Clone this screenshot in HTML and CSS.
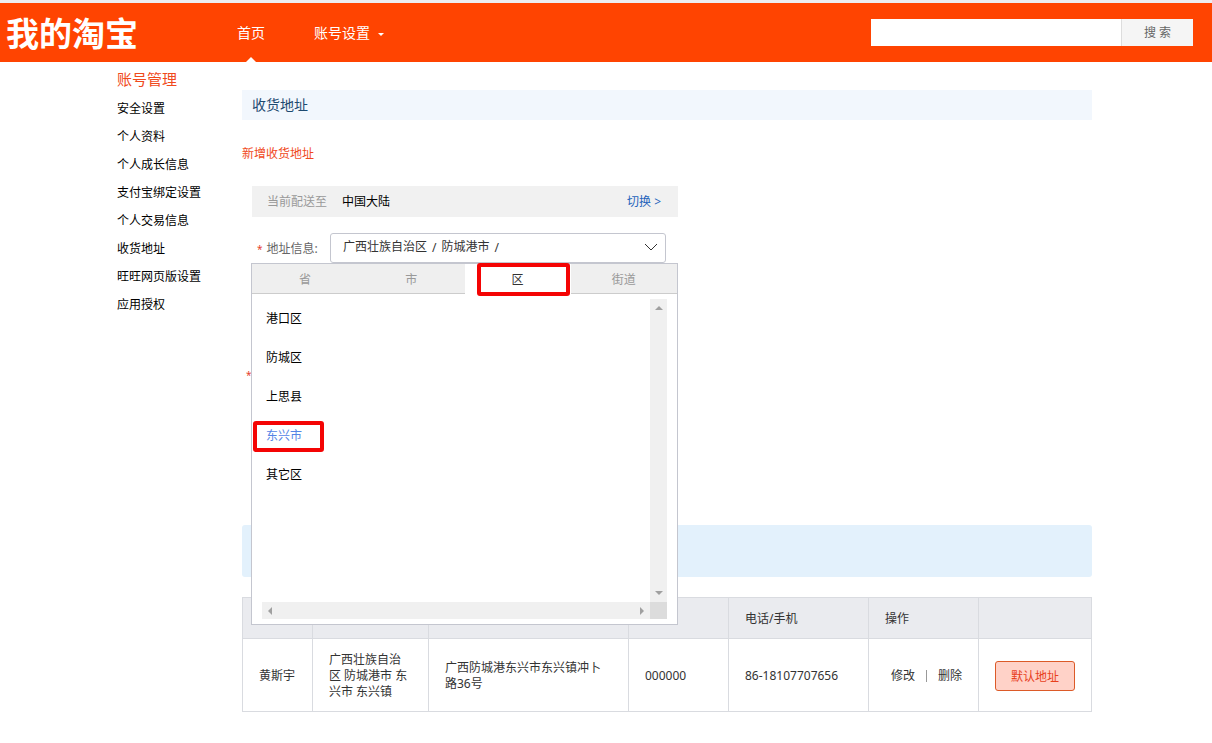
FILE: index.html
```html
<!DOCTYPE html>
<html lang="zh-CN">
<head>
<meta charset="utf-8">
<title>我的淘宝 - 收货地址</title>
<link rel="stylesheet" href="styles.css">
</head>
<body>
<header class="header">
  <a class="logo" href="#">我的淘宝</a>
  <nav class="topnav">
    <a class="topnav-link current" href="#">首页</a>
    <a class="topnav-link" href="#">账号设置
      <svg class="caret" viewBox="0 0 6 3" aria-hidden="true"><path d="M0 0h6L3 3z"/></svg>
    </a>
  </nav>
  <form class="search">
    <input class="search-input" type="text" aria-label="搜索">
    <button class="search-button" type="button">搜 索</button>
  </form>
</header>

<div class="page">
  <nav class="sidebar">
    <h2 class="sidebar-title">账号管理</h2>
    <ul class="sidebar-list">
      <li><a href="#">安全设置</a></li>
      <li><a href="#">个人资料</a></li>
      <li><a href="#">个人成长信息</a></li>
      <li><a href="#">支付宝绑定设置</a></li>
      <li><a href="#">个人交易信息</a></li>
      <li><a href="#">收货地址</a></li>
      <li><a href="#">旺旺网页版设置</a></li>
      <li><a href="#">应用授权</a></li>
    </ul>
  </nav>

  <main class="content">
    <h1 class="content-title">收货地址</h1>
    <h2 class="add-title">新增收货地址</h2>

    <form class="address-form">
      <div class="deliver">
        <span class="deliver-label">当前配送至</span>
        <span class="deliver-place">中国大陆</span>
        <a class="deliver-switch" href="#">切换 &gt;</a>
      </div>

      <div class="field">
        <label class="field-label" for="region"><span class="required">*</span>地址信息:</label>
        <button class="region" id="region" type="button" aria-haspopup="listbox" aria-expanded="true">
          <span>广西壮族自治区</span><span class="slash">/</span><span>防城港市</span><span class="slash">/</span>
          <svg class="chevron" viewBox="0 0 14 8" aria-hidden="true"><path d="M1 1l6 6 6-6"/></svg>
        </button>

        <div class="panel">
          <div class="tabs">
            <button class="tab" type="button">省</button>
            <button class="tab" type="button">市</button>
            <button class="tab active" type="button">区<span class="mark mark-tab"></span></button>
            <button class="tab" type="button">街道</button>
          </div>
          <div class="scroller">
            <ul class="options">
              <li><button class="option" type="button">港口区</button></li>
              <li><button class="option" type="button">防城区</button></li>
              <li><button class="option" type="button">上思县</button></li>
              <li><button class="option selected" type="button">东兴市<span class="mark mark-option"></span></button></li>
              <li><button class="option" type="button">其它区</button></li>
            </ul>
            <div class="track vertical">
              <svg class="arrow-v" viewBox="0 0 8 4" aria-hidden="true"><path d="M0 4h8L4 0z"/></svg>
              <svg class="arrow-v" viewBox="0 0 8 4" aria-hidden="true"><path d="M0 0h8L4 4z"/></svg>
            </div>
            <div class="track">
              <svg class="arrow-h" viewBox="0 0 4 8" aria-hidden="true"><path d="M4 0v8L0 4z"/></svg>
              <svg class="arrow-h" viewBox="0 0 4 8" aria-hidden="true"><path d="M0 0v8l4-4z"/></svg>
            </div>
            <div class="corner"></div>
          </div>
        </div>
      </div>

      <div class="detail-row"><span class="required">*</span></div>
    </form>

    <div class="notice"></div>

    <table class="addresses">
      <colgroup>
        <col class="col-name"><col class="col-region"><col class="col-street"><col class="col-zip">
        <col class="col-phone"><col class="col-action"><col>
      </colgroup>
      <thead>
        <tr><th></th><th></th><th></th><th></th><th>电话/手机</th><th>操作</th><th></th></tr>
      </thead>
      <tbody>
        <tr>
          <td>黄斯宇</td>
          <td>广西壮族自治区 防城港市 东兴市 东兴镇</td>
          <td>广西防城港东兴市东兴镇冲卜路36号</td>
          <td>000000</td>
          <td>86-18107707656</td>
          <td><div class="actions"><a href="#">修改</a><span class="divider"></span><a href="#">删除</a></div></td>
          <td><button class="default-button" type="button">默认地址</button></td>
        </tr>
      </tbody>
    </table>
  </main>
</div>
</body>
</html>
```

FILE: styles.css
```css
* {
  box-sizing: border-box;
}

body {
  margin: 0;
  background: #fff;
  color: #333;
  font: 12px/16px "Noto Sans", "Noto Sans CJK SC", sans-serif;
}

h1, h2, ul {
  margin: 0;
  padding: 0;
  font-weight: 400;
  list-style: none;
}

a {
  color: inherit;
  text-decoration: none;
}

button, input {
  margin: 0;
  padding: 0;
  border: 0;
  border-radius: 0;
  background: none;
  color: inherit;
  font: inherit;
}

/* Header */
.header {
  display: flex;
  align-items: center;
  height: 62px;
  padding: 0 19px 0 6px;
  border-top: 3px solid #ededf0;
  background: #ff4401;
  color: #fff;
}

.logo {
  width: 231px;
  padding-bottom: 2px;
  font-family: "Noto Sans CJK SC", sans-serif;
  font-size: 33px;
  font-weight: 700;
  line-height: 40px;
}

.topnav {
  display: flex;
  align-self: stretch;
  gap: 49px;
  font-size: 14px;
}

.topnav-link {
  position: relative;
  display: flex;
  align-items: center;
  gap: 8px;
}

.current::after {
  content: "";
  position: absolute;
  bottom: 0;
  left: 50%;
  margin-left: -5px;
  border: 5px solid transparent;
  border-top: 0;
  border-bottom-color: #fff;
}

.caret {
  width: 6px;
  height: 3px;
  margin-top: 3px;
  fill: #fff;
}

.search {
  display: flex;
  height: 27px;
  margin-left: auto;
}

.search-input {
  width: 250px;
  padding: 0 8px;
  background: #fff;
  color: #333;
}

.search-button {
  width: 72px;
  border-left: 1px solid #ddd;
  background: #f5f5f5;
  color: #666;
}

/* Page columns */
.page {
  display: grid;
  grid-template-columns: 125px 1fr;
  padding: 0 120px 31px 117px;
}

.sidebar {
  padding-top: 3px;
  color: #000;
}

.sidebar-title {
  color: #f04a1c;
  font-size: 15px;
  line-height: 28px;
}

.sidebar-list {
  padding-top: 2px;
  line-height: 28px;
}

.content {
  padding-top: 28px;
}

.content-title {
  padding-left: 10px;
  background: #f2f7fd;
  color: #1d4a70;
  font-size: 14px;
  line-height: 30px;
}

.add-title {
  margin-top: 20px;
  color: #f04a1c;
  font-size: 12px;
  line-height: 28px;
}

/* Address form */
.address-form {
  max-width: 436px;
  margin-top: 18px;
  padding: 0 0 142px 10px;
}

.deliver {
  display: flex;
  gap: 15px;
  padding: 1px 17px 0 15px;
  background: #f1f1f1;
  line-height: 30px;
}

.deliver-label {
  color: #999;
}

.deliver-place {
  color: #000;
}

.deliver-switch {
  margin-left: auto;
  color: #2463bb;
}

.field {
  position: relative;
  display: flex;
  align-items: center;
  margin-top: 16px;
  padding-right: 12px;
}

.field-label {
  display: flex;
  gap: 4px;
  width: 78px;
  padding: 2px 0 0 5px;
  color: #666;
}

.required {
  color: #e5432f;
  font-size: 10px;
}

.region {
  display: flex;
  flex: 1;
  align-items: center;
  gap: 5px;
  height: 30px;
  padding: 0 7px 2px 12px;
  border: 1px solid #c4c6cf;
  border-radius: 3px;
}

.slash {
  padding-top: 2px;
}

.chevron {
  width: 14px;
  height: 8px;
  margin-left: auto;
  fill: none;
  stroke: #333;
}

.detail-row {
  margin: 104px 0 0 -6px;
}

/* Region drop-down */
.panel {
  position: absolute;
  z-index: 1;
  top: 100%;
  right: 0;
  left: -1px;
  padding-bottom: 5px;
  border: 1px solid #c4c6cf;
  background: #fff;
}

.tabs {
  display: grid;
  grid-template-columns: repeat(4, 1fr);
}

.tab {
  position: relative;
  height: 30px;
  padding-top: 2px;
  border-bottom: 1px solid #ccc;
  background: #efefef;
  color: #999;
}

.active {
  border-bottom-color: #fff;
  background: #fff;
  color: #333;
}

.mark {
  position: absolute;
  border: 4px solid #f40404;
  border-radius: 3px;
}

.mark-tab {
  top: -1px;
  right: 1px;
  bottom: -3px;
  left: 12px;
}

.scroller {
  display: grid;
  grid-template: 303px 17px / 1fr 17px;
  margin: 5px 10px 0;
}

.options {
  color: #000;
}

.option {
  position: relative;
  height: 39px;
  padding-left: 4px;
}

.selected {
  color: #5584e5;
}

.mark-option {
  top: 5px;
  right: -22px;
  bottom: 3px;
  left: -9px;
}

.track {
  display: flex;
  align-items: center;
  justify-content: space-between;
  padding: 0 6px;
  background: #f0f0f0;
}

.vertical {
  flex-direction: column;
  padding: 7px 0;
}

.arrow-v {
  width: 8px;
  height: 4px;
  fill: #a0a0a0;
}

.arrow-h {
  width: 4px;
  height: 8px;
  fill: #a0a0a0;
}

.corner {
  background: #dcdcdc;
}

/* Saved addresses */
.notice {
  height: 52px;
  border-radius: 3px;
  background: #e3f1fc;
}

.addresses {
  width: 100%;
  margin-top: 20px;
  border-collapse: collapse;
  table-layout: fixed;
}

.addresses th,
.addresses td {
  padding: 13px 16px 11px;
  border: 1px solid #d9dbe0;
  font-weight: 400;
  text-align: left;
}

.addresses th {
  height: 41px;
  background: #eaebef;
}

.col-name { width: 70px; }
.col-region { width: 116px; }
.col-street { width: 200px; }
.col-zip { width: 100px; }
.col-phone { width: 140px; }
.col-action { width: 110px; }

.actions {
  display: flex;
  align-items: center;
  justify-content: space-between;
  padding-left: 6px;
}

.divider {
  width: 1px;
  height: 12px;
  background: #999;
}

.default-button {
  display: block;
  width: 80px;
  height: 30px;
  padding-top: 2px;
  border: 1px solid #dc5a28;
  border-radius: 3px;
  background: #ffd2c8;
  color: #e8401c;
}
```
